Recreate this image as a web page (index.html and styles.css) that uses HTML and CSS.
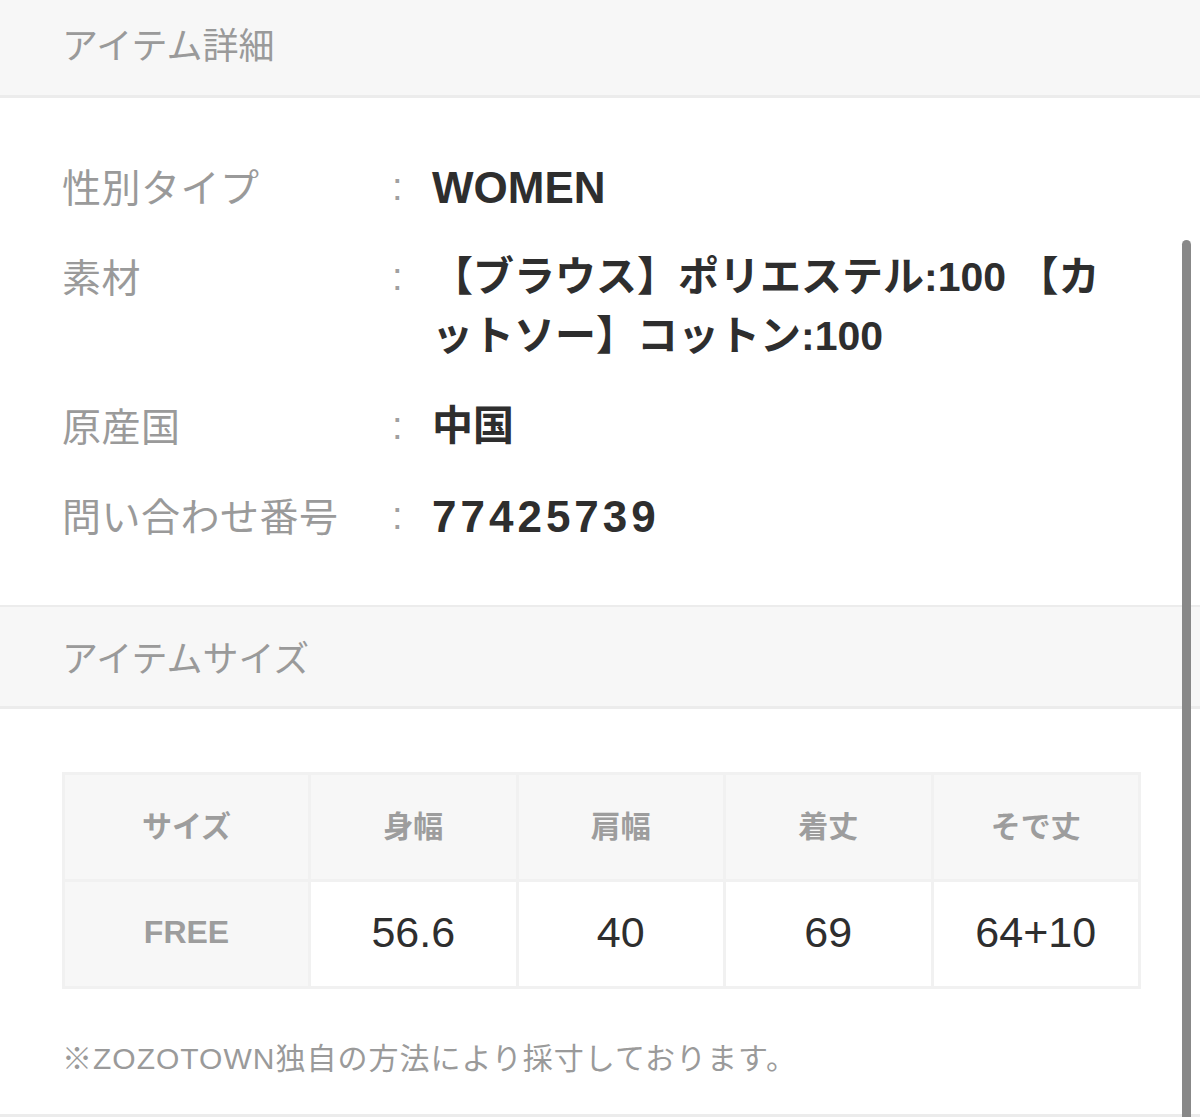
FILE: index.html
```html
<!DOCTYPE html>
<html lang="ja">
<head>
<meta charset="utf-8">
<title>アイテム詳細</title>
<link rel="stylesheet" href="styles.css">
</head>
<body>
<div class="page">
  <div class="section-head section-head--first">アイテム詳細</div>
  <div class="details">
    <div class="row">
      <div class="label">性別タイプ</div>
      <div class="colon">:</div>
      <div class="value value--latin">WOMEN</div>
    </div>
    <div class="row">
      <div class="label">素材</div>
      <div class="colon">:</div>
      <div class="value">【ブラウス】ポリエステル:100 【カ<br>ットソー】コットン:100</div>
    </div>
    <div class="row">
      <div class="label">原産国</div>
      <div class="colon">:</div>
      <div class="value">中国</div>
    </div>
    <div class="row">
      <div class="label">問い合わせ番号</div>
      <div class="colon">:</div>
      <div class="value value--latin value--number">77425739</div>
    </div>
  </div>
  <div class="section-head">アイテムサイズ</div>
  <div class="size-area">
    <table class="size-table">
      <colgroup>
        <col class="c-size"><col class="c-num"><col class="c-num"><col class="c-num"><col class="c-num">
      </colgroup>
      <thead>
        <tr>
          <th>サイズ</th><th>身幅</th><th>肩幅</th><th>着丈</th><th>そで丈</th>
        </tr>
      </thead>
      <tbody>
        <tr>
          <th class="size-name">FREE</th><td>56.6</td><td>40</td><td>69</td><td>64+10</td>
        </tr>
      </tbody>
    </table>
    <p class="note">※ZOZOTOWN独自の方法により採寸しております。</p>
  </div>
  <div class="scrollbar"></div>
</div>
</body>
</html>
```

FILE: styles.css
```css
* { box-sizing: border-box; }

html, body {
  margin: 0;
  padding: 0;
  background: #ffffff;
}

body {
  font-family: "Noto Sans CJK JP", "Noto Sans", sans-serif;
  color: #333333;
  width: 1200px;
  height: 1117px;
  overflow: hidden;
}

.page {
  position: relative;
  width: 1200px;
  height: 1117px;
  border-bottom: 3px solid #ececec;
}

.section-head {
  display: flex;
  align-items: center;
  height: 104px;
  padding-left: 62px;
  padding-bottom: 2px;
  background: #f7f7f7;
  border-top: 2px solid #ececec;
  border-bottom: 3px solid #ececec;
  font-size: 36px;
  color: #9a9a9a;
}

.section-head--first {
  height: 98px;
  border-top: none;
  padding-bottom: 9px;
}

.details {
  display: flex;
  flex-direction: column;
  gap: 31px;
  padding: 60px 62px 59px 62px;
}

.row {
  display: grid;
  grid-template-columns: 318px 52px 1fr;
  align-items: start;
  line-height: 59px;
}

.label {
  font-size: 39px;
  line-height: 54px;
  color: #9a9a9a;
  letter-spacing: 0.5px;
  white-space: nowrap;
}

.colon {
  font-family: "Liberation Sans", sans-serif;
  font-size: 38px;
  color: #a0a0a0;
  padding-left: 12px;
}

.value {
  font-family: "Liberation Sans", "Noto Sans CJK JP", sans-serif;
  font-size: 41px;
  font-weight: bold;
  color: #2e2e2e;
  white-space: nowrap;
}

.value--latin {
  font-size: 44px;
}

.value--number {
  letter-spacing: 4px;
}

.size-area {
  padding: 63px 62px 0 62px;
}

.size-table {
  width: 1076px;
  border-collapse: collapse;
  table-layout: fixed;
}

.c-size { width: 246px; }
.c-num { width: 207.5px; }

.size-table th,
.size-table td {
  border: 3px solid #f1f1f1;
  height: 107px;
  text-align: center;
  vertical-align: middle;
  padding: 0;
}

.size-table thead th {
  background: #f7f7f7;
  font-size: 30px;
  font-weight: bold;
  color: #9d9d9d;
  padding-bottom: 7px;
}

.size-table .size-name {
  background: #f7f7f7;
  font-family: "Liberation Sans", sans-serif;
  font-size: 32px;
  font-weight: bold;
  color: #9d9d9d;
  padding-bottom: 4px;
}

.size-table td {
  background: #ffffff;
  font-family: "Liberation Sans", sans-serif;
  font-size: 43px;
  font-weight: normal;
  color: #2e2e2e;
  padding-bottom: 4px;
}

.note {
  margin: 50px 0 0 0;
  font-family: "Liberation Sans", "Noto Sans CJK JP", sans-serif;
  font-size: 30px;
  line-height: 40px;
  letter-spacing: 1px;
  color: #9a9a9a;
}

.scrollbar {
  position: absolute;
  left: 1182px;
  top: 240px;
  width: 9px;
  height: 900px;
  background: #888888;
  border-radius: 5px 5px 0 0;
}
```
